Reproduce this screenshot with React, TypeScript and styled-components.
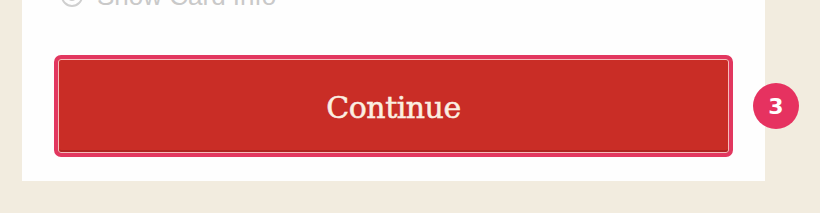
import React from 'react';
import styled, { createGlobalStyle } from 'styled-components';

const GlobalStyle = createGlobalStyle`
  html, body {
    margin: 0;
    padding: 0;
    background: #f2ecdf;
    overflow: hidden;
  }
  body {
    font-family: "Liberation Sans", Arial, sans-serif;
  }
`;

const Page = styled.div`
  display: flex;
  align-items: flex-start;
  width: 820px;
  height: 213px;
`;

const Card = styled.div`
  display: flex;
  flex-direction: column;
  gap: 41px;
  width: 743px;
  box-sizing: border-box;
  margin: -22px 0 0 22px;
  padding: 0 32px 24px;
  background: #fefefe;
`;

const InfoRow = styled.label`
  display: flex;
  align-items: center;
  gap: 13px;
  height: 36px;
  padding-left: 6px;
  font-size: 26px;
  line-height: 36px;
  color: #c9c9c9;
`;

const ButtonRow = styled.div`
  display: flex;
  align-items: center;
`;

const ContinueButton = styled.button`
  width: 679px;
  height: 102px;
  box-sizing: border-box;
  border: 4px solid #e2375f;
  border-radius: 7px;
  background: #c92d26;
  box-shadow: inset 0 0 0 1px rgba(255, 214, 214, 0.85),
    inset 0 -3px 0 rgba(120, 20, 20, 0.35);
  color: #fbefe2;
  font-family: "DejaVu Serif", "Liberation Serif", serif;
  font-size: 30px;
  letter-spacing: -0.5px;
  -webkit-text-stroke: 0.5px #fbefe2;
  padding: 2px 0 0;
  cursor: pointer;
`;

const StepBadge = styled.div`
  position: absolute;
  left: 753px;
  top: 83px;
  width: 46px;
  height: 46px;
  border-radius: 50%;
  background: #e63260;
  color: #ffffff;
  display: flex;
  align-items: center;
  justify-content: center;
  font-family: "DejaVu Sans", sans-serif;
  font-weight: bold;
  font-size: 22px;
`;

const EyeIcon = () => (
  <svg width="24" height="24" viewBox="0 0 24 24" fill="none" stroke="#cfcfcf" strokeWidth="2">
    <circle cx="12" cy="12" r="10" />
    <circle cx="12" cy="12" r="4" fill="#cfcfcf" />
  </svg>
);

export default function App() {
  return (
    <>
      <GlobalStyle />
      <Page>
        <Card>
          <InfoRow>
            <EyeIcon />
            <span>Show Card Info</span>
          </InfoRow>
          <ButtonRow>
            <ContinueButton type="button">Continue</ContinueButton>
          </ButtonRow>
        </Card>
        <StepBadge>3</StepBadge>
      </Page>
    </>
  );
}
